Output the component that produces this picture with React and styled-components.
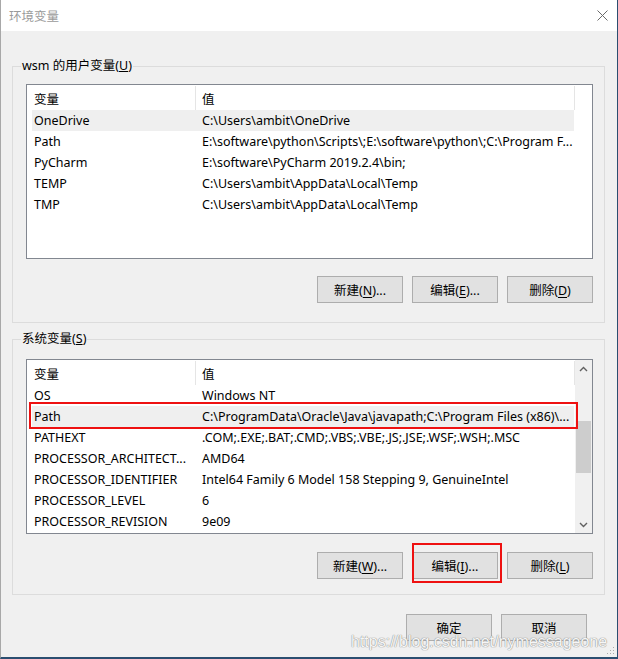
import React from "react";
import styled, { createGlobalStyle } from "styled-components";

const GlobalStyle = createGlobalStyle`
  html, body {
    margin: 0;
    padding: 0;
    background: #ffffff;
  }
  body {
    font-family: "Noto Sans", "Noto Sans CJK SC", sans-serif;
    font-size: 12px;
    color: #000;
  }
`;

const Window = styled.div`
  position: relative;
  box-sizing: border-box;
  width: 618px;
  height: 659px;
  display: flex;
  flex-direction: column;
  background: #f0f0f0;
  border-left: 1px solid #a8a8a8;
  border-right: 1px solid #2b4e70;
  border-bottom: 2px solid #2b4e70;
  overflow: hidden;
`;

const TitleBar = styled.div`
  height: 31px;
  flex: none;
  display: flex;
  align-items: center;
  justify-content: space-between;
  padding: 0 9px 0 8px;
  background: #ffffff;
  color: #9a9a9a;
  font-size: 12.5px;
`;

const Body = styled.div`
  display: flex;
  flex-direction: column;
  padding: 27px 12px 0 11px;
`;

const Group = styled.fieldset`
  margin: ${(p) => p.$top || 0}px 0 0 0;
  padding: ${(p) => p.$padTop}px 11px ${(p) => p.$padBottom}px 8px;
  border: 1px solid #dcdcdc;
  min-width: 0;
`;

const Legend = styled.legend`
  padding: 0 1px;
  line-height: 16px;
  font-size: 12.5px;
`;

const GroupInner = styled.div`
  padding-left: 5px;
  display: flex;
  flex-direction: column;
`;

const ListView = styled.div`
  box-sizing: border-box;
  height: 175px;
  border: 1px solid #828790;
  background: #ffffff;
  display: flex;
`;

const ListContent = styled.div`
  position: relative;
  flex: 1;
  display: flex;
  flex-direction: column;
  min-width: 0;
  font-size: 12.5px;
`;

const Header = styled.div`
  display: flex;
  height: 25px;
  flex: none;
`;

const HeaderCell = styled.div`
  box-sizing: border-box;
  width: ${(p) => p.$w}px;
  padding-left: ${(p) => p.$pad}px;
  display: flex;
  align-items: center;
  border-right: 1px solid #e5e5e5;
  margin-top: 1px;
`;

const Row = styled.div`
  display: flex;
  align-items: center;
  height: 21px;
  width: 542px;
  margin-left: 5px;
  background: ${(p) => (p.$active ? "#efefef" : "transparent")};
  white-space: nowrap;
`;

const NameCell = styled.div`
  box-sizing: border-box;
  width: 163px;
  padding-left: 2px;
  overflow: hidden;
`;

const ValueCell = styled.div`
  flex: 1;
  padding-left: 7px;
  overflow: hidden;
`;

const RedFrame = styled.div`
  position: absolute;
  left: 2px;
  top: 42px;
  width: 549px;
  height: 27px;
  box-sizing: border-box;
  border: 2px solid #ee1111;
  pointer-events: none;
`;

const ScrollBar = styled.div`
  width: 17px;
  flex: none;
  display: flex;
  flex-direction: column;
  background: #f0f0f0;
`;

const ScrollArrow = styled.div`
  height: 17px;
  flex: none;
  display: flex;
  align-items: center;
  justify-content: center;
`;

const ScrollTrack = styled.div`
  flex: 1;
`;

const Thumb = styled.div`
  margin: 44px 1px 0 1px;
  height: 52px;
  background: #cdcdcd;
`;

const ButtonRow = styled.div`
  display: flex;
  justify-content: flex-end;
  gap: 9px;
  margin-top: ${(p) => p.$top}px;
  margin-right: ${(p) => p.$right || 0}px;
`;

const Button = styled.button`
  box-sizing: border-box;
  width: 86px;
  height: 27px;
  padding: 0;
  background: #e1e1e1;
  border: 1px solid #adadad;
  font-family: "Noto Sans", "Noto Sans CJK SC", sans-serif;
  font-size: 12.5px;
  color: #000;
  u {
    text-underline-offset: 2px;
  }
`;

const Marked = styled.span`
  position: relative;
  display: inline-flex;
`;

const ButtonFrame = styled.span`
  position: absolute;
  left: 0;
  top: -9px;
  width: 90px;
  height: 40px;
  box-sizing: border-box;
  border: 2px solid #ee1111;
  pointer-events: none;
`;

const Watermark = styled.div`
  position: absolute;
  left: 350px;
  top: 633px;
  font-family: "Liberation Sans", Arial, sans-serif;
  font-size: 16px;
  color: #f6f6f6;
  text-shadow: 0 0 1px #8a8a8a, 0 0 1px #8a8a8a;
  pointer-events: none;
`;

const Grip = styled.svg`
  position: absolute;
  right: 2px;
  bottom: 2px;
`;

const userVars = [
  ["OneDrive", "C:\\Users\\ambit\\OneDrive", true],
  ["Path", "E:\\software\\python\\Scripts\\;E:\\software\\python\\;C:\\Program F..."],
  ["PyCharm", "E:\\software\\PyCharm 2019.2.4\\bin;"],
  ["TEMP", "C:\\Users\\ambit\\AppData\\Local\\Temp"],
  ["TMP", "C:\\Users\\ambit\\AppData\\Local\\Temp"],
];

const systemVars = [
  ["OS", "Windows NT"],
  ["Path", "C:\\ProgramData\\Oracle\\Java\\javapath;C:\\Program Files (x86)\\...", true],
  ["PATHEXT", ".COM;.EXE;.BAT;.CMD;.VBS;.VBE;.JS;.JSE;.WSF;.WSH;.MSC"],
  ["PROCESSOR_ARCHITECT...", "AMD64"],
  ["PROCESSOR_IDENTIFIER", "Intel64 Family 6 Model 158 Stepping 9, GenuineIntel"],
  ["PROCESSOR_LEVEL", "6"],
  ["PROCESSOR_REVISION", "9e09"],
];

const Chevron = ({ up }) => (
  <svg width="9" height="6" viewBox="0 0 9 6">
    <path
      d={up ? "M1 5 L4.5 1.5 L8 5" : "M1 1 L4.5 4.5 L8 1"}
      fill="none"
      stroke="#606060"
      strokeWidth="1.4"
    />
  </svg>
);

const Table = ({ rows, highlight }) => (
  <ListContent>
    <Header>
      <HeaderCell $w={169} $pad={7}>变量</HeaderCell>
      <HeaderCell $w={379} $pad={6}>值</HeaderCell>
    </Header>
    {rows.map(([name, value, active]) => (
      <Row key={name} $active={active}>
        <NameCell>{name}</NameCell>
        <ValueCell>{value}</ValueCell>
      </Row>
    ))}
    {highlight && <RedFrame />}
  </ListContent>
);

export default function App() {
  return (
    <>
      <GlobalStyle />
      <Window>
        <TitleBar>
          <span>环境变量</span>
          <svg width="11" height="11" viewBox="0 0 11 11">
            <path d="M0.5 0.5 L10.5 10.5 M10.5 0.5 L0.5 10.5" stroke="#6a6a6a" strokeWidth="1" />
          </svg>
        </TitleBar>
        <Body>
          <Group $padTop={10} $padBottom={19}>
            <Legend>
              wsm 的用户变量(<u>U</u>)
            </Legend>
            <GroupInner>
              <ListView>
                <Table rows={userVars} />
              </ListView>
              <ButtonRow $top={17}>
                <Button>
                  新建(<u>N</u>)...
                </Button>
                <Button>
                  编辑(<u>E</u>)...
                </Button>
                <Button>
                  删除(<u>D</u>)
                </Button>
              </ButtonRow>
            </GroupInner>
          </Group>
          <Group $top={8} $padTop={12} $padBottom={15}>
            <Legend>
              系统变量(<u>S</u>)
            </Legend>
            <GroupInner>
              <ListView>
                <Table rows={systemVars} highlight />
                <ScrollBar>
                  <ScrollArrow>
                    <Chevron up />
                  </ScrollArrow>
                  <ScrollTrack>
                    <Thumb />
                  </ScrollTrack>
                  <ScrollArrow>
                    <Chevron />
                  </ScrollArrow>
                </ScrollBar>
              </ListView>
              <ButtonRow $top={18}>
                <Button>
                  新建(<u>W</u>)...
                </Button>
                <Marked>
                  <Button>
                    编辑(<u>I</u>)...
                  </Button>
                  <ButtonFrame />
                </Marked>
                <Button>
                  删除(<u>L</u>)
                </Button>
              </ButtonRow>
            </GroupInner>
          </Group>
          <ButtonRow $top={19} $right={18}>
            <Button>确定</Button>
            <Button>取消</Button>
          </ButtonRow>
        </Body>
        <Watermark>https://blog.csdn.net/nymessageone</Watermark>
        <Grip width="8" height="8" viewBox="0 0 8 8">
          <rect x="6" y="0" width="1" height="1" fill="#aaa" />
          <rect x="3" y="3" width="1" height="1" fill="#aaa" />
          <rect x="6" y="3" width="1" height="1" fill="#aaa" />
          <rect x="0" y="6" width="1" height="1" fill="#aaa" />
          <rect x="3" y="6" width="1" height="1" fill="#aaa" />
          <rect x="6" y="6" width="1" height="1" fill="#aaa" />
        </Grip>
      </Window>
    </>
  );
}
